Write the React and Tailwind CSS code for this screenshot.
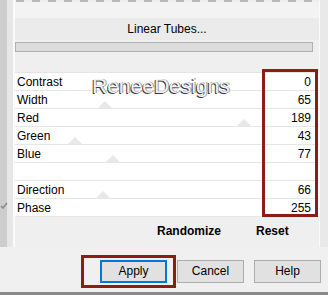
export default function App() {
  const rows = [
    ["Contrast", "0"],
    ["Width", "65"],
    ["Red", "189"],
    ["Green", "43"],
    ["Blue", "77"],
    ["", ""],
    ["Direction", "66"],
    ["Phase", "255"],
  ];
  const tri = {
    1: [83],
    2: [222],
    3: [53],
    4: [91],
    6: [81],
  };
  return (
    <div className="relative w-[328px] h-[295px] overflow-hidden bg-[#f0f0f0] font-['Liberation_Sans',Arial,sans-serif] text-[12px] text-black">
      <div className="flex h-[247px]">
        {/* left strip */}
        <div className="relative flex h-full">
          <div className="w-[7px] bg-[#cdcdcd]" />
          <div className="w-[6px] bg-[#e7e7e7]" />
          <div className="w-[2px] bg-[#fafafa]" />
          <svg className="absolute left-0 top-[202px]" width="8" height="7" viewBox="0 0 8 7">
            <polyline points="1,4 3,6 7,1" fill="none" stroke="#8a8a8a" strokeWidth="1.5" />
          </svg>
        </div>
        {/* panel */}
        <div className="relative w-[304px] flex flex-col bg-[#efefef]">
          <div className="h-[2px] ml-px bg-[repeating-linear-gradient(90deg,#b8b8b8_0_8px,transparent_8px_16px)]" />
          <div className="h-[16px] bg-[#f3f3f3]" />
          <div className="h-[22px] bg-[#ebebeb] flex items-center justify-center">
            Linear Tubes...
          </div>
          <div className="h-[2px]" />
          <div className="h-[10px] w-[298px] border border-[#b0b0b0] bg-[#dcdcdc]" />
          <div className="h-[20px]" />
          <div className="border-t border-[#e4e4e4]">
            {rows.map(([label, value], i) => (
              <div
                key={i}
                className="relative h-[18px] bg-white border-b border-[#e6e6e6] flex items-center justify-between pl-[2px] pr-[8px]"
              >
                {(tri[i] || []).map((x, j) => (
                  <svg
                    key={j}
                    className="absolute bottom-0"
                    style={{ left: x }}
                    width="14"
                    height="7"
                    viewBox="0 0 14 7"
                  >
                    <polygon points="0,7 7,0 14,7" fill="#e8e8e8" />
                  </svg>
                ))}
                <span className="relative">{label}</span>
                <span className="relative">{value}</span>
              </div>
            ))}
          </div>
          <div className="h-[26px] flex items-center font-bold text-[12px] pt-[1px]">
            <span className="ml-[142px]">Randomize</span>
            <span className="ml-[35px]">Reset</span>
          </div>
          {/* watermark */}
          <div className="absolute left-[77px] top-[75px] text-[21px] leading-[21px] text-[#f2f2f2] [text-shadow:-1px_1px_0_#3a3a3a,1px_0_0_#9a9a9a]">
            ReneeDesigns
          </div>
          {/* red box around values */}
          <div className="absolute left-[247px] top-[69px] w-[56px] h-[148px] border-[3px] border-[#8c1c14]" />
        </div>
        {/* right strip */}
        <div className="flex h-full">
          <div className="w-px bg-[#fafafa]" />
          <div className="w-[8px] bg-[#e9e9e9]" />
        </div>
      </div>
      <div className="h-[45px] flex items-center pl-[100px] gap-[10px] pt-[3px]">
        <div className="relative">
          <div className="absolute -left-[19px] -top-[5px] w-[95px] h-[33px] border-[3px] border-[#8c1c14]" />
          <div className="w-[67px] h-[23px] border-2 border-[#0078d7] bg-[#e1e1e1] flex items-center justify-center">
            Apply
          </div>
        </div>
        <div className="w-[67px] h-[23px] border border-[#adadad] bg-[#e1e1e1] flex items-center justify-center">
          Cancel
        </div>
        <div className="w-[67px] h-[23px] border border-[#adadad] bg-[#e1e1e1] flex items-center justify-center">
          Help
        </div>
      </div>
      <div className="h-[3px] bg-[#8a8a8a]" />
    </div>
  );
}
